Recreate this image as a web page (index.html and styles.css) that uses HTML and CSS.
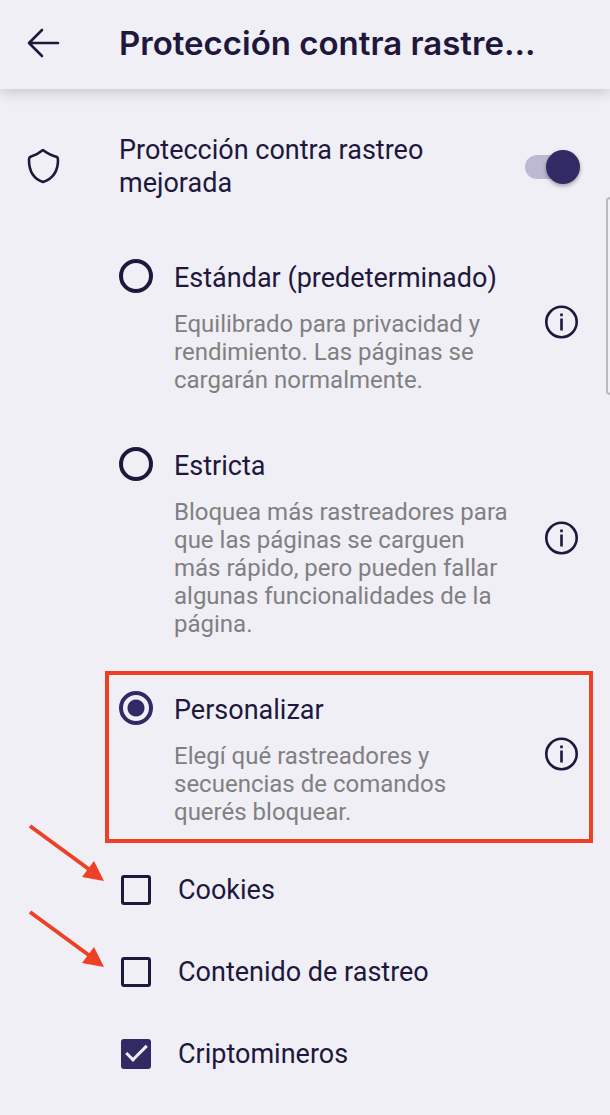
FILE: index.html
```
<!DOCTYPE html>
<html lang="es">
<head>
  <meta charset="UTF-8">
  <meta name="viewport" content="width=device-width, initial-scale=1">
  <title>Protección contra rastreo</title>
  <link rel="stylesheet" href="styles.css">
</head>
<body>
  <header class="topbar">
    <button class="icon-btn" type="button" aria-label="Volver">
      <svg width="34" height="34" viewBox="0 0 34 34"><path d="M16 4 L3 17 L16 30 M3 17 H32"/></svg>
    </button>
    <h1>Protección contra rastre...</h1>
  </header>

  <main>
    <div class="setting">
      <svg class="shield" width="34" height="36" viewBox="0 0 34 36"><path d="M17 1 Q23 6 31 8 Q32 9 32 11 C32 23 26 30 17 33 C8 30 3 23 3 11 Q3 9 4 8 Q11 6 17 1 Z"/></svg>
      <label for="mejorada">Protección contra rastreo mejorada</label>
      <input class="switch" type="checkbox" role="switch" id="mejorada" checked>
    </div>

    <div class="options">
      <div class="option">
        <input class="radio" type="radio" name="nivel" id="estandar">
        <div class="option-text">
          <label for="estandar">Estándar (predeterminado)</label>
          <p>Equilibrado para privacidad y rendimiento. Las páginas se cargarán normalmente.</p>
        </div>
        <button class="icon-btn info" type="button" aria-label="Información">
          <svg width="34" height="34" viewBox="0 0 34 34"><circle cx="17.5" cy="17" r="15.2"/><path d="M17.5 13.5 V25.5 M17.5 8.5 V11.3"/></svg>
        </button>
      </div>

      <div class="option">
        <input class="radio" type="radio" name="nivel" id="estricta">
        <div class="option-text">
          <label for="estricta">Estricta</label>
          <p>Bloquea más rastreadores para que las páginas se carguen más rápido, pero pueden fallar algunas funcionalidades de la página.</p>
        </div>
        <button class="icon-btn info" type="button" aria-label="Información">
          <svg width="34" height="34" viewBox="0 0 34 34"><circle cx="17.5" cy="17" r="15.2"/><path d="M17.5 13.5 V25.5 M17.5 8.5 V11.3"/></svg>
        </button>
      </div>

      <div class="option marked">
        <input class="radio" type="radio" name="nivel" id="personalizar" checked>
        <div class="option-text">
          <label for="personalizar">Personalizar</label>
          <p>Elegí qué rastreadores y secuencias de comandos querés bloquear.</p>
        </div>
        <button class="icon-btn info" type="button" aria-label="Información">
          <svg width="34" height="34" viewBox="0 0 34 34"><circle cx="17.5" cy="17" r="15.2"/><path d="M17.5 13.5 V25.5 M17.5 8.5 V11.3"/></svg>
        </button>
      </div>
    </div>

    <div class="checks">
      <div class="check">
        <input class="box" type="checkbox" id="cookies">
        <label for="cookies">Cookies</label>
      </div>
      <div class="check">
        <input class="box" type="checkbox" id="contenido">
        <label for="contenido">Contenido de rastreo</label>
      </div>
      <div class="check">
        <input class="box" type="checkbox" id="cripto" checked>
        <label for="cripto">Criptomineros</label>
      </div>

      <!-- Flechas rojas -->
      <svg class="arrows" width="80" height="146" viewBox="0 0 80 146">
        <path class="line" d="M2 3 L62 47 M2 89 L62 133"/>
        <path class="head" d="M76 58 L54 54 L66 38 Z M76 144 L54 140 L66 124 Z"/>
      </svg>
    </div>
  </main>

  <div class="handle"></div>
</body>
</html>
```
FILE: styles.css
```
* {
  box-sizing: border-box;
}

body {
  margin: 0;
  position: relative;
  overflow-x: hidden;
  background-color: #f0eff5;
  color: #20173d;
  font-family: Roboto, 'Liberation Sans', sans-serif;
  font-size: 27px;
  line-height: 33px;
}

svg {
  display: block;
  fill: none;
  stroke: #20173d;
  stroke-width: 2.6;
  stroke-linecap: round;
  stroke-linejoin: round;
}

.icon-btn {
  flex: none;
  padding: 0;
  border: none;
  background: none;
}

.info svg {
  stroke-linecap: butt;
}

/* Barra superior */
.topbar {
  display: flex;
  align-items: center;
  gap: 59px;
  height: 89px;
  padding: 0 26px 4px;
  box-shadow: 0 2px 14px rgba(0, 0, 0, 0.2);
}

.topbar h1 {
  margin: 0;
  font-family: Inter, Roboto, sans-serif;
  font-size: 33px;
  font-weight: 600;
  line-height: 40px;
  white-space: nowrap;
}

/* Interruptor principal */
.setting {
  display: flex;
  align-items: center;
  padding: 45px 30px 50px 26px;
}

.setting label {
  flex: 1;
  padding: 0 80px 0 59px;
}

.shield {
  flex: none;
}

.switch {
  appearance: none;
  flex: none;
  position: relative;
  width: 55px;
  height: 24px;
  margin: 0;
  border-radius: 12px;
  background-color: #bdb9d2;
}

.switch::before {
  content: "";
  position: absolute;
  top: -5px;
  right: 0;
  width: 34px;
  height: 34px;
  border-radius: 50%;
  background-color: #312a64;
  box-shadow: 0 2px 4px rgba(0, 0, 0, 0.35);
}

/* Opciones */
.options {
  display: flex;
  flex-direction: column;
  gap: 44px;
  padding: 0 32px 0 119px;
}

.option {
  position: relative;
  display: flex;
  align-items: center;
}

.radio {
  appearance: none;
  flex: none;
  align-self: flex-start;
  width: 34px;
  height: 34px;
  margin: 9px 21px 0 0;
  border: 4px solid #20173d;
  border-radius: 50%;
}

.radio:checked {
  border-color: #312a64;
  background: radial-gradient(circle, #312a64 8px, transparent 9px);
}

.option-text {
  flex: 1;
  padding: 12px 30px 0 0;
}

.option-text p {
  margin: 15px 0 0;
  color: #808083;
  font-size: 24px;
  line-height: 28px;
}

/* Recuadro rojo */
.marked::after {
  content: "";
  position: absolute;
  inset: -11px -15px -17px -14px;
  border: 4px solid #ee4026;
  pointer-events: none;
}

/* Casillas */
.checks {
  position: relative;
  padding: 23px 32px 19px 121px;
}

.check {
  display: flex;
  align-items: center;
  gap: 27px;
  height: 82px;
}

.box {
  appearance: none;
  width: 30px;
  height: 30px;
  margin: 0;
  border: 3px solid #20173d;
  border-radius: 3px;
}

.box:checked {
  position: relative;
  border-color: #312a64;
  background-color: #312a64;
}

.box:checked::after {
  content: "";
  position: absolute;
  top: -2px;
  left: 7px;
  width: 8px;
  height: 18px;
  border: solid #f0eff5;
  border-width: 0 3px 3px 0;
  transform: rotate(45deg);
}

.arrows {
  position: absolute;
  top: -3px;
  left: 28px;
}

.arrows .line {
  stroke: #ee4026;
  stroke-width: 4;
  stroke-linecap: butt;
}

.arrows .head {
  fill: #ee4026;
  stroke: none;
}

/* Pestaña del borde derecho */
.handle {
  position: absolute;
  top: 197px;
  right: 0;
  width: 4px;
  height: 198px;
  border: 2px solid #bcbbc0;
  border-right: none;
  border-radius: 8px 0 0 8px;
}
```
